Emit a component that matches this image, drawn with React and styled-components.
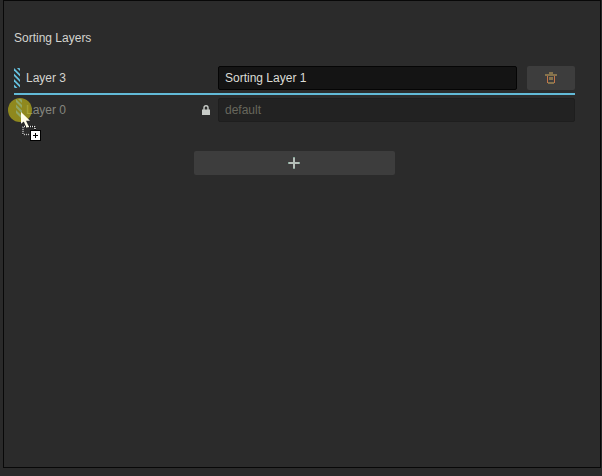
import React from "react";
import styled, { createGlobalStyle } from "styled-components";

const GlobalStyle = createGlobalStyle`
  * { box-sizing: border-box; }
  html, body { margin: 0; background: #2a2a2a; overflow: hidden; }
  body { font: 12px/16px "Liberation Sans", Arial, sans-serif; color: #d4d4cf; }
`;

const Page = styled.div`
  position: relative;
  width: 602px;
  height: 476px;
  padding-left: 3px;
  background: #2a2a2a;
`;

const Panel = styled.section`
  width: 598px;
  height: 468px;
  padding: 29px 25px 0 10px;
  border: 1px solid #080808;
  background: #2b2b2b;
`;

const Title = styled.h1`
  margin: 0 0 20px;
  font-size: 12px;
  line-height: 16px;
  font-weight: 400;
`;

const Row = styled.div`
  display: flex;
  align-items: center;
  height: 24px;
`;

const Label = styled.div`
  display: flex;
  align-items: center;
  width: 204px;
  gap: 6px;
  padding-right: 8px;
  color: ${(p) => (p.$dimmed ? "#85867f" : "#d4d4cf")};
`;

const LabelText = styled.span`
  flex: 1;
`;

const Input = styled.input`
  flex: 1;
  min-width: 0;
  height: 24px;
  padding: 0 6px;
  border: 1px solid ${(p) => (p.disabled ? "#1e1e1e" : "#050505")};
  border-radius: 2px;
  outline: 0;
  background: ${(p) => (p.disabled ? "#222222" : "#141414")};
  color: ${(p) => (p.disabled ? "#67675d" : "#dcdcd6")};
  font: inherit;
`;

const Button = styled.button`
  display: flex;
  align-items: center;
  justify-content: center;
  height: 24px;
  padding: 0;
  border: 0;
  border-radius: 2px;
  background: #3d3d3d;
`;

const DeleteButton = styled(Button)`
  width: 48px;
  margin-left: 10px;
`;

const AddButton = styled(Button)`
  width: 201px;
  margin: 29px 0 0 180px;
  padding-right: 1px;
`;

const DropLine = styled.div`
  height: 2px;
  margin: 3px 0;
  background: #62bad7;
`;

const Icon = styled.svg`
  display: block;
  flex: none;
`;

const HandleSpace = styled.span`
  width: 6px;
  height: 20px;
`;

const Cursor = styled.svg`
  position: absolute;
  left: 7px;
  top: 97px;
`;

const stripes = [-5.5, 0, 5.5, 11, 16.5];

function DragHandle() {
  return (
    <Icon width="6" height="20" viewBox="0 0 6 20">
      {stripes.map((y) => (
        <path key={y} d={`M0 ${y}L6 ${y + 6}V${y + 8.6}L0 ${y + 2.6}Z`} fill="#66c3e1" />
      ))}
    </Icon>
  );
}

function LockIcon() {
  return (
    <Icon width="8" height="10" viewBox="0 0 8 10">
      <path d="M2 5V2.7a2 2 0 0 1 4 0V5" fill="none" stroke="#c8ccc8" strokeWidth="1.4" />
      <path d="M0 4.5h8V10H0Z" fill="#c8ccc8" />
    </Icon>
  );
}

function TrashIcon() {
  return (
    <Icon width="12" height="12" viewBox="0 0 12 12" shapeRendering="crispEdges">
      <path d="M4 0h4v2h4v2H0V2h4ZM4 5h4v3H4ZM3 10h6v2H3Z" fill="#85734d" />
      <path d="M2 4h1v7H2ZM9 4h1v7H9Z" fill="#c57448" />
    </Icon>
  );
}

function PlusIcon() {
  return (
    <Icon width="12" height="12" viewBox="0 0 12 12" shapeRendering="crispEdges">
      <path d="M5 0h2v12H5Z" fill="#b4beb8" />
      <path d="M0 5h12v2H0Z" fill="#b4beb8" />
      <path d="M0 5h1v2H0ZM11 5h1v2h-1ZM5 0h2v1H5ZM5 11h2v1H5Z" fill="#82a396" />
    </Icon>
  );
}

function DragCursor() {
  return (
    <Cursor width="34" height="44" viewBox="0 0 34 44">
      <circle cx="13" cy="13" r="12" fill="#bab11a" fillOpacity=".7" />
      <path d="M9 2l6 6v3L9 5ZM9 7.5l6 6v3l-6-6ZM9 13l6 6v3l-6-6ZM11 2h3l1 1v3Z" fill="#90a768" />
      <rect x="16" y="29.5" width="12" height="8" rx="1" fill="none" stroke="#111" strokeWidth="2" />
      <rect x="16" y="29.5" width="12" height="8" rx="1" fill="none" stroke="#e6e6e6" strokeWidth="1.6" strokeDasharray="1 1" />
      <path d="M14 15V26.7l2.8-2.3 2.8 6.4 2.2-1-2.8-6H23Z" fill="#fffde9" />
      <g shapeRendering="crispEdges">
        <path d="M23 33h11v11H23Z" fill="#000" />
        <path d="M24 34h9v9h-9Z" fill="#fff" />
        <path d="M26 38h5v1h-5ZM28 36h1v5h-1Z" fill="#000" />
      </g>
    </Cursor>
  );
}

export default function App() {
  return (
    <>
      <GlobalStyle />
      <Page>
        <Panel>
          <Title>Sorting Layers</Title>
          <Row>
            <Label><DragHandle /><LabelText>Layer 3</LabelText></Label>
            <Input defaultValue="Sorting Layer 1" aria-label="Layer 3 name" />
            <DeleteButton aria-label="Delete layer"><TrashIcon /></DeleteButton>
          </Row>
          <DropLine />
          <Row>
            <Label $dimmed><HandleSpace /><LabelText>Layer 0</LabelText><LockIcon /></Label>
            <Input defaultValue="default" disabled aria-label="Layer 0 name" />
          </Row>
          <AddButton aria-label="Add layer"><PlusIcon /></AddButton>
        </Panel>
        <DragCursor />
      </Page>
    </>
  );
}
